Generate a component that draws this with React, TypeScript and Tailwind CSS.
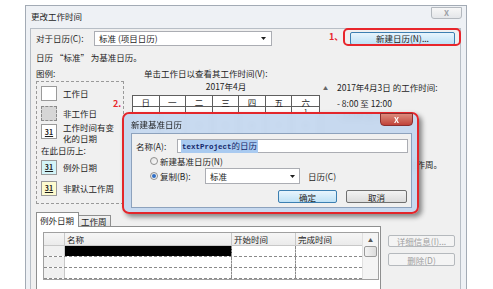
import React from "react";

const WEEK = ["日", "一", "二", "三", "四", "五", "六"];
const DAYS = [
  ["", "", "", "", "", "", "1"],
  ["2", "3", "4", "5", "6", "7", "8"],
  ["9", "10", "11", "12", "13", "14", "15"],
  ["16", "17", "18", "19", "20", "21", "22"],
  ["23", "24", "25", "26", "27", "28", "29"],
  ["30", "", "", "", "", "", ""],
];

function Arrow() {
  return (
    <svg width="5" height="3" viewBox="0 0 5 3" className="shrink-0">
      <path d="M0 0h5L2.5 3z" fill="#1e1e1e" />
    </svg>
  );
}

function LegendBox({ bg, label, dashed }: { bg: string; label?: string; dashed?: boolean }) {
  return (
    <div
      className={`w-[16px] h-[15px] shrink-0 border ${dashed ? "border-dashed border-[#8a8a8a]" : "border-[#9a9a9a]"} ${bg} flex items-center justify-center`}
    >
      {label && <span className="text-[7px] leading-[8px] font-bold underline underline-offset-1">{label}</span>}
    </div>
  );
}

function Radio({ checked }: { checked?: boolean }) {
  return (
    <div className="w-[8px] h-[8px] rounded-full border border-[#8e8f8f] bg-gradient-to-br from-[#e4e4e4] to-[#fafafa] flex items-center justify-center shrink-0">
      {checked && <div className="w-[4px] h-[4px] rounded-full bg-[#2f6ec4]" />}
    </div>
  );
}

export default function App() {
  return (
    <div className="relative w-[493px] h-[289px] overflow-hidden bg-white text-[8.5px] leading-[12px] text-[#1e1e1e] font-['Noto_Sans_CJK_SC','Noto_Sans',sans-serif]">
      {/* main dialog */}
      <div className="ml-[25px] mt-[5px] w-[442px] h-[300px] border border-[#a3abb5] bg-[#eef1f5] flex flex-col">
        <div className="h-[22px] flex items-start shrink-0">
          <span className="pl-[5px] mt-[4px]">更改工作时间</span>
          <div className="ml-auto mr-[4px] mt-[1px] w-[31px] h-[12px] border border-[#b3b8be] rounded-b-[3px] bg-gradient-to-b from-[#f7f7f7] to-[#e4e6e9] flex items-center justify-center text-[8px] leading-[8px] font-bold text-[#9ca0a6]">
            X
          </div>
        </div>

        <div className="ml-[4px] mr-[5px] flex-1 border border-[#b7bec6] bg-[#f0f0f0] flex flex-col">
          {/* row 1 */}
          <div className="mt-[1px] h-[16px] pl-[5px] flex items-center">
            <span className="w-[58px] shrink-0">对于日历(C):</span>
            <div className="w-[178px] h-[15px] border border-[#abadb3] bg-white flex items-center pl-[4px] pr-[5px]">
              <span>标准 (项目日历)</span>
              <span className="ml-auto">
                <Arrow />
              </span>
            </div>
            <div className="ml-auto mr-[5px] w-[105px] h-[13px] border border-[#3c7fb1] rounded-[2px] bg-gradient-to-b from-[#e8f5fd] to-[#bfe2f6] flex items-center justify-center">
              新建日历(N)...
            </div>
          </div>

          <div className="mt-[5px] h-[12px] pl-[5px]">日历 “标准” 为基准日历。</div>

          {/* row 3 */}
          <div className="mt-[4px] pl-[5px] flex">
            <div className="w-[88px] shrink-0">
              <div className="h-[12px]">图例:</div>
              <div className="mt-[2px] h-[123px] border border-dashed border-[#9a9a9a] pl-[4px] pt-[3px]">
                <div className="h-[16px] flex items-center gap-[6px]">
                  <LegendBox bg="bg-white" />
                  <span>工作日</span>
                </div>
                <div className="mt-[4px] h-[16px] flex items-center gap-[6px]">
                  <LegendBox bg="bg-[#d6d6d6]" dashed />
                  <span>非工作日</span>
                </div>
                <div className="mt-[1px] flex items-start gap-[6px]">
                  <div className="mt-[2px]">
                    <LegendBox bg="bg-white" label="31" />
                  </div>
                  <span className="leading-[11px]">
                    工作时间有变
                    <br />
                    化的日期
                  </span>
                </div>
                <div className="h-[12px]">在此日历上:</div>
                <div className="mt-[3px] h-[16px] flex items-center gap-[6px]">
                  <LegendBox bg="bg-[#d3f4f8]" label="31" />
                  <span>例外日期</span>
                </div>
                <div className="mt-[5px] h-[16px] flex items-center gap-[6px]">
                  <LegendBox bg="bg-[#fdfbcf]" label="31" />
                  <span>非默认工作周</span>
                </div>
              </div>
            </div>

            {/* calendar */}
            <div className="ml-[8px] flex shrink-0">
              <div className="w-[188px]">
                <div className="h-[12px] pl-[12px] whitespace-nowrap">单击工作日以查看其工作时间(V):</div>
                <div className="mt-[1px] h-[12px] text-center">2017年4月</div>
                <div className="mt-[3px] border border-[#5e5e5e] bg-white">
                  <div className="grid grid-cols-7 h-[11px] border-b border-[#5e5e5e]">
                    {WEEK.map((d, i) => (
                      <div key={d} className={`flex items-center justify-center ${i < 6 ? "border-r border-[#5e5e5e]" : ""}`}>
                        {d}
                      </div>
                    ))}
                  </div>
                  {DAYS.map((row, r) => (
                    <div key={r} className="grid grid-cols-7 h-[14px]">
                      {row.map((d, i) => (
                        <div key={i} className={`text-[7px] leading-[9px] text-center ${i < 6 ? "border-r border-[#5e5e5e]" : ""}`}>
                          {d}
                        </div>
                      ))}
                    </div>
                  ))}
                </div>
              </div>
              <div className="w-[9px] pt-[18px] pl-[3px] text-[5px] leading-[6px] text-[#666]">▲</div>
            </div>

            <div className="ml-[8px] flex-1">
              <div className="mt-[14px] h-[12px] whitespace-nowrap">2017年4月3日 的工作时间:</div>
              <div className="mt-[4px] h-[12px] whitespace-nowrap">- 8:00 至 12:00</div>
              <div className="h-[11px] whitespace-nowrap">- 13:00 至 17:00</div>
              <div className="mt-[17px] h-[12px]">基于:</div>
              <div className="mt-[9px] h-[12px] text-right pr-[18px] whitespace-nowrap">默认工作周。</div>
            </div>
          </div>

          {/* tabs + table */}
          <div className="mt-[8px] pl-[5px] flex">
            <div className="w-[345px]">
              <div className="flex items-end h-[15px]">
                <div className="w-[43px] h-[15px] border border-b-0 border-[#8e8f8f] bg-white pl-[3px] leading-[14px] relative z-10">
                  例外日期
                </div>
                <div className="w-[32px] h-[12px] border border-l-0 border-[#8e8f8f] bg-gradient-to-b from-[#f2f2f2] to-[#e3e3e3] pl-[2px] leading-[11px]">
                  工作周
                </div>
              </div>
              <div className="-mt-px h-[70px] border border-[#8e8f8f] bg-white pl-[6px] pt-[5px]">
                <div className="w-[336px] border border-[#a0a0a0] flex">
                  <div className="w-[318px]">
                    <div className="flex h-[13px] bg-gradient-to-b from-[#f6f6f6] to-[#ebebeb] border-b border-[#c8c8c8]">
                      <div className="w-[21px] border-r border-[#c8c8c8]" />
                      <div className="w-[167px] border-r border-[#c8c8c8] pl-[2px] leading-[13px]">名称</div>
                      <div className="w-[64px] border-r border-[#c8c8c8] pl-[2px] leading-[13px]">开始时间</div>
                      <div className="w-[66px] pl-[2px] leading-[13px]">完成时间</div>
                    </div>
                    {[0, 1, 2].map((r) => (
                      <div key={r} className="flex h-[11px] border-b border-dashed border-[#8a8a8a]">
                        <div className="w-[21px] bg-[#f0f0f0] border-r border-[#c8c8c8]" />
                        <div className={`w-[167px] border-r border-dashed border-[#8a8a8a] ${r === 0 ? "bg-black" : ""}`} />
                        <div className="w-[64px] border-r border-dashed border-[#8a8a8a]" />
                        <div className="w-[66px]" />
                      </div>
                    ))}
                  </div>
                  <div className="w-[17px] border-l border-[#e0e0e0] bg-[#f4f4f4] flex flex-col items-center">
                    <div className="h-[13px] text-[5px] leading-[13px] text-[#555]">▲</div>
                    <div className="w-[13px] h-[11px] border border-[#9a9a9a] rounded-[2px] bg-gradient-to-r from-[#f3f3f3] to-[#dcdcdc]" />
                  </div>
                </div>
              </div>
            </div>
            <div className="ml-[7px] mt-[23px] flex flex-col gap-[6px]">
              <div className="w-[67px] h-[12px] border border-[#b5b9bd] rounded-[2px] bg-[#f4f4f4] text-[#a0a0a0] flex items-center justify-center">
                详细信息(I)...
              </div>
              <div className="w-[67px] h-[13px] border border-[#b5b9bd] rounded-[2px] bg-[#f4f4f4] text-[#a0a0a0] flex items-center justify-center">
                删除(D)
              </div>
            </div>
          </div>
        </div>
      </div>

      {/* annotation 1 */}
      <span className="absolute left-[329px] top-[31px] text-[9px] leading-[12px] font-bold text-[#e8262c]">1、</span>
      <div className="absolute left-[343px] top-[28px] w-[118px] h-[18px] border-2 border-[#e8262c] rounded-[5px]" />

      {/* annotation 2 */}
      <span className="absolute left-[113px] top-[98px] text-[9px] leading-[12px] font-bold text-[#e8262c]">2.</span>

      {/* new base calendar dialog */}
      <div className="absolute left-[122px] top-[112px] w-[297px] h-[102px] border-2 border-[#e3262b] rounded-[7px] bg-[#c2d6ee]/90 backdrop-blur-[3px] shadow-[3px_3px_5px_rgba(0,0,0,0.45)]">
        <div className="relative h-[19px] flex items-center pl-[7px]">
          <span>新建基准日历</span>
          <div className="absolute left-[256px] -top-[1px] w-[33px] h-[13px] border border-[#8a2f2f] rounded-b-[4px] bg-gradient-to-b from-[#dc8a7c] to-[#c0423a] flex items-center justify-center text-[8px] leading-[8px] font-bold text-white">
            X
          </div>
        </div>
        <div className="ml-[7px] w-[281px] h-[75px] border border-[#8da2bd] bg-[#f0f0f0]">
          <div className="mt-[5px] h-[14px] flex items-center">
            <span className="w-[45px] pl-[4px] shrink-0">名称(A):</span>
            <div className="w-[231px] h-[14px] border border-[#abadb3] bg-white flex items-center pl-[3px]">
              <span className="bg-[#a9caf0] text-[#14286a] leading-[11px] px-[1px]">
                <span className="font-['Liberation_Mono',monospace] font-bold text-[7.5px]">textProject</span>的日历
              </span>
            </div>
          </div>
          <div className="mt-[2px] h-[12px] pl-[18px] flex items-center gap-[2px]">
            <Radio />
            <span>新建基准日历(N)</span>
          </div>
          <div className="mt-[1px] h-[16px] pl-[18px] flex items-center">
            <Radio checked />
            <span className="ml-[2px] w-[45px]">复制(B):</span>
            <div className="w-[95px] h-[16px] border border-[#abadb3] bg-white flex items-center pl-[4px] pr-[4px]">
              <span>标准</span>
              <span className="ml-auto">
                <Arrow />
              </span>
            </div>
            <span className="ml-[8px]">日历(C)</span>
          </div>
          <div className="mt-[6px] flex justify-end gap-[9px] pr-[4px]">
            <div className="w-[59px] h-[13px] border border-[#3c7fb1] rounded-[2px] bg-gradient-to-b from-[#e8f5fd] to-[#bfe2f6] flex items-center justify-center">
              确定
            </div>
            <div className="w-[61px] h-[13px] border border-[#707070] rounded-[2px] bg-gradient-to-b from-[#f3f3f3] to-[#dcdcdc] flex items-center justify-center">
              取消
            </div>
          </div>
        </div>
      </div>
    </div>
  );
}
